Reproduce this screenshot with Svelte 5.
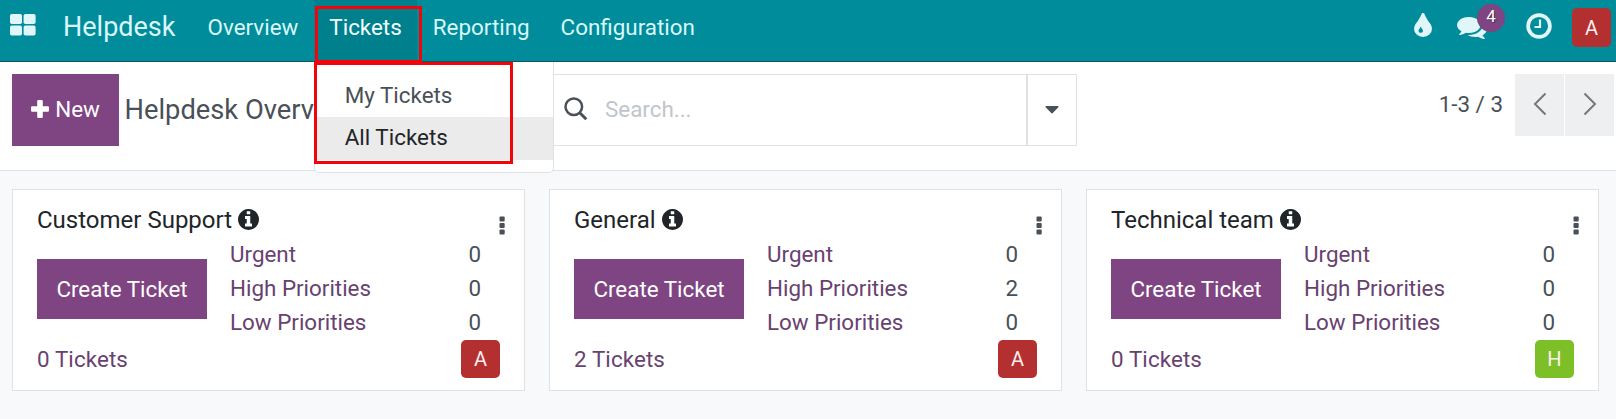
<script lang="ts">
  interface Team {
    name: string
    urgent: number
    high: number
    low: number
    tickets: number
    initial: string
    tone: 'red' | 'green'
  }

  const teams: Team[] = [
    { name: 'Customer Support', urgent: 0, high: 0, low: 0, tickets: 0, initial: 'A', tone: 'red' },
    { name: 'General', urgent: 0, high: 2, low: 0, tickets: 2, initial: 'A', tone: 'red' },
    { name: 'Technical team', urgent: 0, high: 0, low: 0, tickets: 0, initial: 'H', tone: 'green' }
  ]

  const menus = ['Overview', 'Tickets', 'Reporting', 'Configuration']
  const ticketMenu = ['My Tickets', 'All Tickets']

  let openMenu = $state('Tickets')
  let hovered = $state('All Tickets')
</script>

<div class="app">
  <nav class="navbar">
    <button class="apps" aria-label="Apps">
      <svg width="26" height="22" viewBox="0 0 26 22" fill="currentColor">
        <rect x="0" y="0" width="12" height="10" rx="1.8" />
        <rect x="13.6" y="0" width="12" height="10" rx="1.8" />
        <rect x="0" y="11.6" width="12" height="10" rx="1.8" />
        <rect x="13.6" y="11.6" width="12" height="10" rx="1.8" />
      </svg>
    </button>
    <span class="brand">Helpdesk</span>
    {#each menus as menu}
      <div class="menu">
        <button
          class="menu-toggle"
          class:open={openMenu === menu}
          onclick={() => (openMenu = openMenu === menu ? '' : menu)}
        >
          {menu}
        </button>
        {#if menu === 'Tickets' && openMenu === menu}
          <div class="toggle-mark"></div>
          <div class="dropdown">
            {#each ticketMenu as item}
              <button class="item" class:active={hovered === item} onmouseenter={() => (hovered = item)}>
                {item}
              </button>
            {/each}
            <div class="list-mark"></div>
          </div>
        {/if}
      </div>
    {/each}

    <div class="systray">
      <svg class="tint" width="18" height="25" viewBox="0 0 1024 1536" fill="currentColor" preserveAspectRatio="none">
        <path d="M512 1152q0-36-20-69-1-1-15.500-22.500t-25.500-38-25-44-21-50.500q-4-16-21-16t-21 16q-7 23-21 50.500t-25 44-25.500 38-15.500 22.500q-20 33-20 69 0 53 37.500 90.500t90.500 37.500 90.500-37.500 37.500-90.500zm512-128q0 212-150 362t-362 150-362-150-150-362q0-145 81-275 6-9 62.500-90.500t101-151 99.500-178 83-201.500q9-30 34-47t51-17 51.500 17 33.500 47q28 93 83 201.500t99.500 178 101 151 62.500 90.500q81 127 81 275z" />
      </svg>
      <div class="messages">
        <svg width="30" height="28" viewBox="0 0 1792 1792" fill="currentColor" preserveAspectRatio="none">
          <path d="M1408 768q0 139-94 257t-256.500 186.500-353.500 68.500q-86 0-176-16-124 88-278 128-36 9-86 16h-3q-11 0-20.500-8t-11.500-21q-1-3-1-6.500t.5-6.500 2-6l2.500-5 3.500-5.500 4-5 4.500-5 4-4.500q5-6 23-25t26-29.500 22.500-29 25-38.500 20.500-44q-124-72-195-177t-71-224q0-139 94-257t256.500-186.500 353.500-68.500 353.500 68.500 256.500 186.500 94 257zm384 256q0 120-71 224.500t-195 176.500q10 24 20.500 44t25 38.500 22.500 29 26 29.500 23 25q1 1 4 4.500t4.500 5 4 5 3.500 5.500l2.500 5t2 6 .5 6.500-1 6.500q-3 14-13 22t-22 7q-50-7-86-16-154-40-278-128-90 16-176 16-271 0-472-132 58 4 88 4 161 0 309-45t264-129q125-92 192-212t67-254q0-77-23-152 129 71 204 178t75 230z" />
        </svg>
        <span class="badge">4</span>
      </div>
      <svg class="clock" width="26" height="26" viewBox="0 0 26 26" fill="none" stroke="currentColor">
        <circle cx="13" cy="13" r="10.9" stroke-width="3.700" />
        <path d="M14 6.500v7.500H8.500" stroke-width="2.200" />
      </svg>
      <span class="avatar user red">A</span>
    </div>
  </nav>

  <header class="control-panel">
    <button class="primary new">
      <svg width="18" height="18" viewBox="0 0 18 18" fill="currentColor">
        <path d="M7.400 0h3.200q1.200 0 1.200 1.200v5h5q1.200 0 1.200 1.200v3.200q0 1.200-1.200 1.200h-5v5q0 1.200-1.200 1.200H7.400q-1.200 0-1.200-1.200v-5h-5Q0 11.800 0 10.600V7.400q0-1.200 1.200-1.200h5v-5Q6.200 0 7.400 0z" />
      </svg>
      New
    </button>
    <h1>Helpdesk Overview</h1>
    <div class="search">
      <div class="search-box">
        <svg width="24" height="24" viewBox="0 0 24 24" fill="none" stroke="currentColor" stroke-width="2.500">
          <circle cx="9.800" cy="9.800" r="8.300" />
          <path d="M15.700 15.700l6.600 6.600" stroke-width="3" />
        </svg>
        <span>Search...</span>
      </div>
      <button class="search-toggle" aria-label="Search options">
        <svg width="14" height="8" viewBox="0 0 14 8" fill="currentColor">
          <path d="M1 0h12q1 .3.300 1.300L7.800 7q-.8.800-1.600 0L.7 1.300Q0 .3 1 0z" />
        </svg>
      </button>
    </div>
    <div class="pager">
      <span>1-3 / 3</span>
      <div class="pager-buttons">
        <button aria-label="Previous">
          <svg width="14" height="24" viewBox="0 0 14 24" fill="none" stroke="currentColor" stroke-width="2">
            <path d="M12.500 1.500L2 12l10.500 10.500" />
          </svg>
        </button>
        <button aria-label="Next">
          <svg width="14" height="24" viewBox="0 0 14 24" fill="none" stroke="currentColor" stroke-width="2">
            <path d="M1.500 1.500L12 12 1.500 22.500" />
          </svg>
        </button>
      </div>
    </div>
  </header>

  <main class="kanban">
    {#each teams as team}
      <article class="card">
        <div class="card-top">
          <h2>
            {team.name}
            <svg width="21" height="21" viewBox="128 128 1536 1536" fill="currentColor">
              <path d="M1152 1376v-160q0-14-9-23t-23-9h-96v-512q0-14-9-23t-23-9h-320q-14 0-23 9t-9 23v160q0 14 9 23t23 9h96v320h-96q-14 0-23 9t-9 23v160q0 14 9 23t23 9h448q14 0 23-9t9-23zm-128-896v-160q0-14-9-23t-23-9h-192q-14 0-23 9t-9 23v160q0 14 9 23t23 9h192q14 0 23-9t9-23zm640 416q0 209-103 385.500t-279.500 279.500-385.500 103-385.500-103-279.500-279.500-103-385.500 103-385.500 279.500-279.500 385.500-103 385.500 103 279.500 279.500 103 385.500z" />
            </svg>
          </h2>
          <button class="kebab" aria-label="Settings">
            <svg width="6" height="19" viewBox="0 0 6 19" fill="currentColor">
              <rect x=".5" y=".5" width="5.200" height="5" rx="1" />
              <rect x=".5" y="7" width="5.200" height="5" rx="1" />
              <rect x=".5" y="13.500" width="5.200" height="5" rx="1" />
            </svg>
          </button>
        </div>
        <div class="card-body">
          <button class="primary create">Create Ticket</button>
          <dl>
            <dt>Urgent</dt>
            <dd>{team.urgent}</dd>
            <dt>High Priorities</dt>
            <dd>{team.high}</dd>
            <dt>Low Priorities</dt>
            <dd>{team.low}</dd>
          </dl>
        </div>
        <div class="card-footer">
          <span>{team.tickets} Tickets</span>
          <span class="avatar {team.tone}">{team.initial}</span>
        </div>
      </article>
    {/each}
  </main>
</div>

<style>
  :global(body) {
    background: #f8f9fb;
  }

  .app {
    height: 419px;
    overflow: hidden;
    background: #f8f9fb;
    color: #495057;
    font-family: Roboto, 'Liberation Sans', sans-serif;
    font-size: 22.4px;
    line-height: 34px;
  }

  .app * {
    box-sizing: border-box;
  }

  button {
    padding: 0;
    border: 0;
    background: none;
    color: inherit;
    font: inherit;
  }

  svg {
    display: block;
    flex-shrink: 0;
  }

  .navbar {
    display: flex;
    height: 62px;
    background: #008c9b;
    border-bottom: 1px solid #11555f;
    color: #d9f8fa;
  }

  .navbar svg {
    color: #e0f6f8;
  }

  .apps {
    display: flex;
    align-items: flex-start;
    width: 63px;
    padding: 13.5px 0 0 10px;
  }

  .brand {
    width: 129px;
    padding-top: 10px;
    font-size: 27px;
  }

  .menu {
    position: relative;
  }

  .menu-toggle {
    display: block;
    height: 61px;
    padding: 0 15.4px 7px 15.6px;
    white-space: nowrap;
  }

  .menu-toggle.open {
    background: #007f8d;
    color: #f2ffff;
  }

  .dropdown {
    position: absolute;
    z-index: 2;
    top: 62px;
    left: 0;
    width: 240px;
    height: 111px;
    padding-top: 13px;
    background: #fff;
    border: 1px solid #dee2e6;
    border-top: 0;
    border-radius: 0 0 5px 5px;
    color: #495057;
  }

  .item {
    display: block;
    width: 100%;
    height: 42px;
    padding: 0 0 2px 30px;
    text-align: left;
  }

  .item.active {
    height: 43px;
    padding-bottom: 3px;
    background: #ebebeb;
    color: #212529;
  }

  .toggle-mark,
  .list-mark {
    position: absolute;
    z-index: 3;
    border: 3px solid #f20509;
    pointer-events: none;
  }

  .toggle-mark {
    top: 6px;
    left: 1px;
    width: 107px;
    height: 57px;
  }

  .list-mark {
    top: 0;
    left: -1px;
    width: 199px;
    height: 102px;
  }

  .systray {
    display: flex;
    align-items: flex-start;
    margin-left: auto;
    padding-right: 5px;
  }

  .tint {
    margin-top: 12px;
  }

  .messages {
    position: relative;
    margin: 13px 0 0 25px;
  }

  .badge {
    position: absolute;
    top: -9px;
    left: 20px;
    width: 28px;
    height: 28px;
    border-radius: 50%;
    background: #7f4482;
    color: #fff;
    font-size: 17px;
    line-height: 25px;
    text-align: center;
    text-shadow: 1px 1px 0 rgba(0, 0, 0, 0.4);
  }

  .clock {
    margin: 13px 0 0 39px;
  }

  .avatar {
    width: 39px;
    height: 38px;
    border-radius: 5px;
    color: #fbeeee;
    font-size: 20px;
    line-height: 39px;
    text-align: center;
  }

  .avatar.red {
    background: #b43030;
  }

  .avatar.green {
    background: #7dbf26;
  }

  .avatar.user {
    height: 39px;
    margin: 8px 0 0 20px;
    line-height: 41px;
  }

  .control-panel {
    display: flex;
    align-items: flex-start;
    height: 109px;
    padding: 12px 2px 0 12px;
    background: #fff;
    border-bottom: 1px solid #dee2e6;
  }

  .primary {
    background: #7f4482;
    color: #fff;
    white-space: nowrap;
  }

  .new {
    display: flex;
    align-items: center;
    justify-content: center;
    gap: 6px;
    width: 107px;
    height: 72px;
    padding-bottom: 3px;
  }

  h1 {
    width: 365px;
    margin: 0;
    padding: 19px 0 0 5.5px;
    font-size: 27.3px;
    font-weight: 400;
    white-space: nowrap;
  }

  .search {
    display: flex;
    width: 593px;
    height: 72px;
    border: 1px solid #dee2e6;
  }

  .search-box {
    display: flex;
    flex: 1;
    align-items: center;
    gap: 17px;
    padding: 0 0 2px 79px;
    border-right: 2px solid #dee2e6;
  }

  .search-box span {
    color: #bfc5cb;
  }

  .search-toggle {
    display: flex;
    align-items: center;
    justify-content: center;
    width: 48px;
    padding-bottom: 1px;
  }

  .pager {
    display: flex;
    gap: 12px;
    margin-left: auto;
  }

  .pager > span {
    padding-top: 13px;
  }

  .pager-buttons {
    display: flex;
    gap: 1px;
  }

  .pager-buttons button {
    display: flex;
    align-items: center;
    justify-content: center;
    width: 49px;
    height: 62px;
    padding-bottom: 2px;
    background: #eeeff1;
    color: #777;
  }

  .kanban {
    display: grid;
    grid-template-columns: repeat(3, 513px);
    gap: 24px;
    padding: 18px 12px;
  }

  .card {
    height: 202px;
    padding: 13px 17px 0 24px;
    background: #fff;
    border: 1px solid #dee2e6;
  }

  .card-top {
    display: flex;
    justify-content: space-between;
    height: 36px;
  }

  h2 {
    display: flex;
    align-items: flex-start;
    gap: 6px;
    margin: 0;
    color: #212529;
    font-size: 24px;
    font-weight: 400;
  }

  h2 svg {
    margin-top: 6px;
  }

  .kebab {
    align-self: flex-start;
    padding: 13px 2px 0 0;
  }

  .card-body {
    display: flex;
    gap: 23px;
    height: 101px;
  }

  .create {
    width: 170px;
    height: 60px;
    margin-top: 20px;
  }

  dl {
    display: grid;
    flex: 1;
    grid-template-columns: 1fr 13px;
    grid-auto-rows: 34px;
    margin: -2px 25.5px 0 0;
  }

  dt {
    color: #68426f;
  }

  dd {
    margin: 0;
  }

  .card-footer {
    display: flex;
    justify-content: space-between;
    padding: 0 7px 0 0;
    color: #68426f;
  }

  .card-footer > span:first-child {
    padding-top: 2px;
    letter-spacing: 0.1px;
  }
</style>
